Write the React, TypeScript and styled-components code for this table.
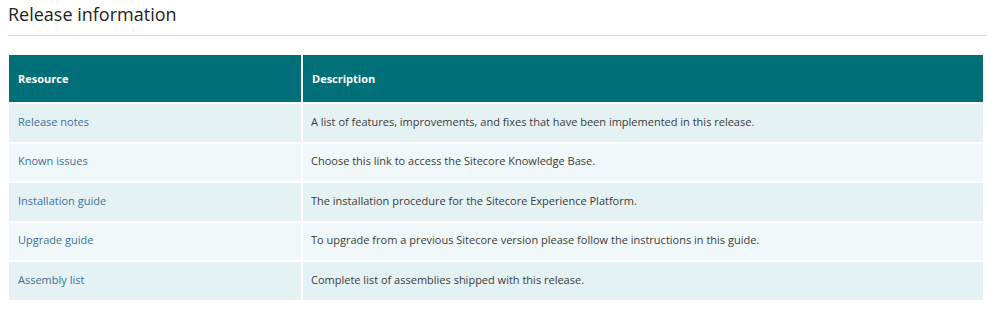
import styled, { createGlobalStyle } from 'styled-components';

const GlobalStyle = createGlobalStyle`
  body {
    margin: 0;
    background: #ffffff;
    font-family: 'Open Sans', 'Noto Sans', sans-serif;
  }
`;

const RESOURCES = [
  {
    name: 'Release notes',
    description:
      'A list of features, improvements, and fixes that have been implemented in this release.',
  },
  {
    name: 'Known issues',
    description: 'Choose this link to access the Sitecore Knowledge Base.',
  },
  {
    name: 'Installation guide',
    description: 'The installation procedure for the Sitecore Experience Platform.',
  },
  {
    name: 'Upgrade guide',
    description:
      'To upgrade from a previous Sitecore version please follow the instructions in this guide.',
  },
  {
    name: 'Assembly list',
    description: 'Complete list of assemblies shipped with this release.',
  },
];

const App = () => {
  return (
    <>
      <GlobalStyle />
      <Page>
        <Title>Release information</Title>
        <Rule />
        <Table>
          <thead>
            <tr>
              <HeadCell $width={294}>Resource</HeadCell>
              <HeadCell>Description</HeadCell>
            </tr>
          </thead>
          <tbody>
            {RESOURCES.map((item, i) => (
              <Row key={item.name} $odd={i % 2 === 1}>
                <Cell>
                  <ResourceLink href='#'>{item.name}</ResourceLink>
                </Cell>
                <Cell>{item.description}</Cell>
              </Row>
            ))}
          </tbody>
        </Table>
      </Page>
    </>
  );
};

const Page = styled.main`
  width: 979px;
  padding: 0 0 0 8px;
`;

const Title = styled.h2`
  margin: 0;
  padding-top: 1px;
  height: 34px;
  font-family: 'Open Sans', 'Noto Sans', sans-serif;
  font-size: 18px;
  font-weight: 400;
  line-height: 26px;
  color: #222222;
`;

const Rule = styled.hr`
  margin: 0 0 19px;
  border: 0;
  border-top: 1px solid #d6d6d6;
`;

const Table = styled.table`
  width: 978px;
  margin-left: -1px;
  border-collapse: collapse;
  border: 0;
  font-size: 11px;
`;

const HeadCell = styled.th<{ $width?: number }>`
  width: ${({ $width }) => ($width ? `${$width}px` : 'auto')};
  height: 48px;
  padding: 0 8px 1px 9px;
  box-sizing: border-box;
  background: #006f78;
  border: 2px solid #ffffff;
  border-top: 0;
  color: #ffffff;
  font-weight: 700;
  text-align: left;
  vertical-align: middle;
`;

const Row = styled.tr<{ $odd: boolean }>`
  background: ${({ $odd }) => ($odd ? '#f1f8f9' : '#e5f2f4')};
`;

const Cell = styled.td`
  height: 39.5px;
  padding: 0 8px 3px 8px;
  box-sizing: border-box;
  border: 2px solid #ffffff;
  color: #3b3b3b;
  vertical-align: middle;

  &:first-child {
    padding-left: 9px;
  }
`;

const ResourceLink = styled.a`
  color: #3f6f98;
  text-decoration: none;
`;

export default App;
